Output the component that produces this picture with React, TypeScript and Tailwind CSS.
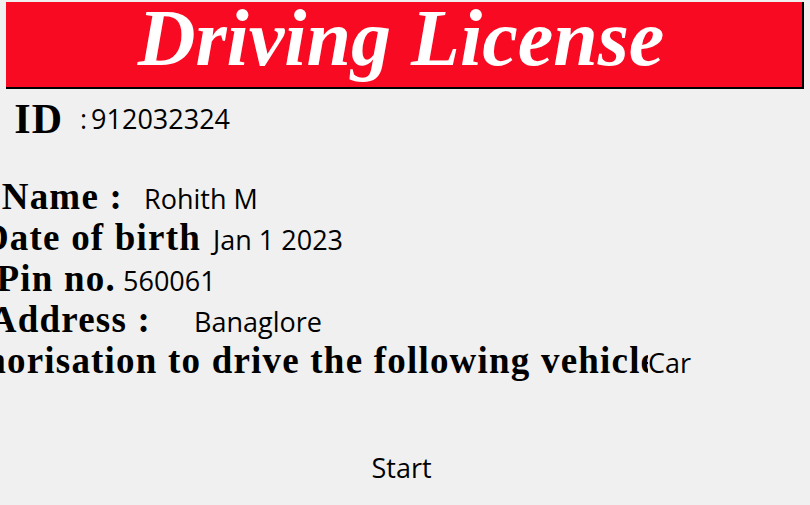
const serif = "font-['Liberation_Serif',serif]";
const sans = "font-['Open_Sans',sans-serif]";

type Row = {
  label: string;
  box: string;
  value: string;
  gap: string;
};

const rows: Row[] = [
  { label: "Name :", box: "w-[123px]", value: "Rohith M", gap: "ml-[21px]" },
  { label: "Date of birth", box: "w-[201px]", value: "Jan 1 2023", gap: "ml-[12px]" },
  { label: "Pin no.", box: "w-[116px]", value: "560061", gap: "ml-[7px]" },
  { label: "Address :", box: "w-[151px]", value: "Banaglore", gap: "ml-[43px]" },
];

export default function App() {
  return (
    <div className="w-full h-screen overflow-hidden bg-[#f0f0f0] text-black">
      <div className="ml-[6px] mt-[2px] w-[798px] h-[87px] bg-[#f80a22] border-r-2 border-b-2 border-black pt-[2px] pr-[6px] text-center">
        <h1 className={`${serif} text-[80px] leading-[68px] font-bold italic text-white`}>
          Driving License
        </h1>
      </div>

      <div className="mt-[8px] flex items-start">
        <div className={`${serif} w-[63px] shrink-0 flex justify-end text-[42px] leading-[44px] font-bold tracking-[1px]`}>
          <span className="whitespace-nowrap">ID</span>
        </div>
        <div className={`${sans} ml-[17px] text-[27px] leading-[44px] whitespace-nowrap`}>
          <span>:</span>
          <span className="ml-[4px]">912032324</span>
        </div>
      </div>

      <div className="mt-[35px] flex flex-col">
        {rows.map((row) => (
          <div key={row.label} className="flex items-baseline h-[41px]">
            <div className={`${serif} ${row.box} shrink-0 flex justify-end text-[37px] leading-[41px] font-bold tracking-[1.2px]`}>
              <span className="whitespace-nowrap">{row.label}</span>
            </div>
            <span className={`${sans} ${row.gap} text-[27px] leading-[30px] whitespace-nowrap`}>
              {row.value}
            </span>
          </div>
        ))}
        <div className="flex items-baseline h-[41px]">
          <div className={`${serif} w-[648px] shrink-0 overflow-hidden text-[37px] leading-[41px] font-bold tracking-[1.2px]`}>
            <span className="block -ml-[78px] whitespace-nowrap">
              Authorisation to drive the following vehicles
            </span>
          </div>
          <span className={`${sans} text-[27px] leading-[30px] whitespace-nowrap`}>Car</span>
        </div>
      </div>

      <div className="mt-[72px] flex justify-center pr-[7px]">
        <button className={`${sans} text-[27px] leading-[30px] bg-transparent`}>Start</button>
      </div>
    </div>
  );
}
